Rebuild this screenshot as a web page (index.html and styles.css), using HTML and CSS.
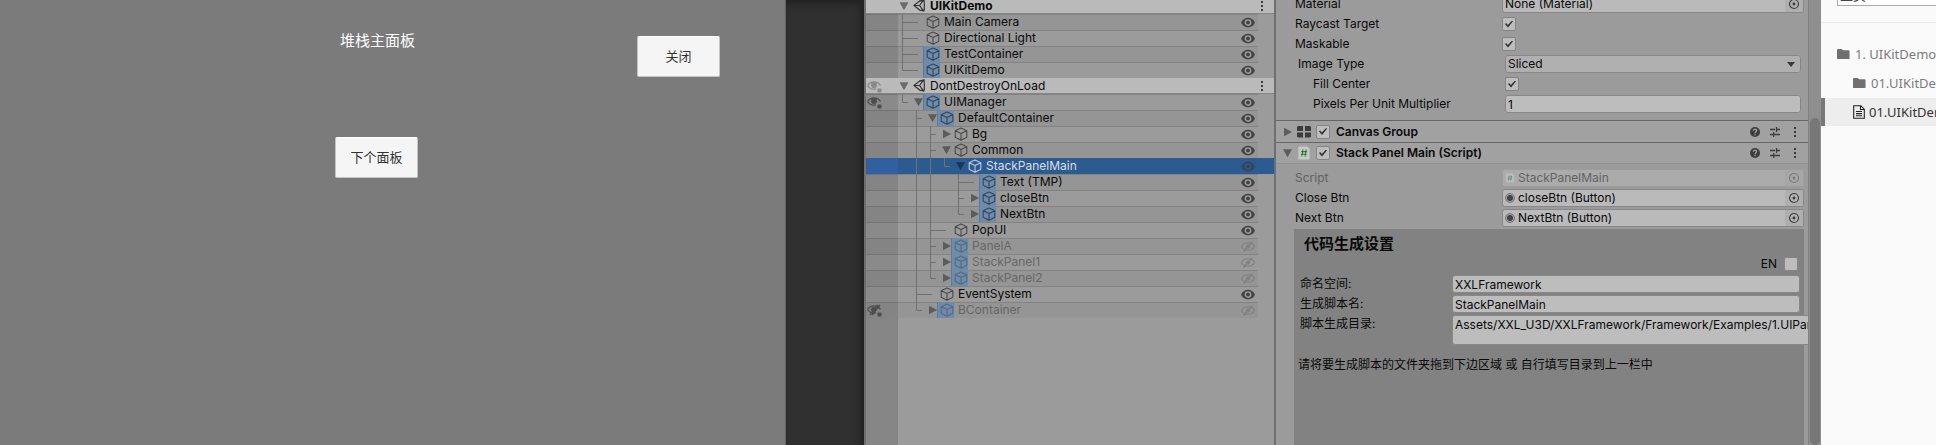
FILE: index.html
```
<!DOCTYPE html>
<html lang="zh-CN">
<head>
<meta charset="utf-8">
<title>UIKitDemo</title>
<link rel="stylesheet" href="styles.css">
</head>
<body>
<svg class="defs" aria-hidden="true">
  <symbol id="cube" viewBox="0 0 14 14"><path d="M7 .9 12.8 3.7V10.3L7 13.2 1.2 10.3V3.7ZM1.2 3.7 7 6.5 12.8 3.7M7 6.5V13.2" fill="none" stroke="currentColor" stroke-width="1.1" stroke-linejoin="round"/></symbol>
  <symbol id="unity" viewBox="0 0 13 13"><path d="M11.4 4.2 10.9.9 7.6 1.9M7.6 1.2 1 6.4 7.6 11.8M10.9 12.1 11.5 8.8M7.8 11.2 10.9 12.1M1.4 6.5H6.6M6.6 6.5 10.2 1.4M6.6 6.5 10.2 11.6M11.3 3.8V9.2" fill="none" stroke="currentColor" stroke-width="1.2"/></symbol>
  <symbol id="down" viewBox="0 0 10 16"><path d="M1.5 4.2H10.5L6 12.2Z" fill="currentColor"/></symbol>
  <symbol id="right" viewBox="0 0 10 16"><path d="M2.5 3.8V12.2L10.5 8Z" fill="currentColor"/></symbol>
  <symbol id="line" viewBox="0 0 14 16"><path d="M4.5 0V16" stroke="#707070"/></symbol>
  <symbol id="tee" viewBox="0 0 14 16"><path d="M4.5 0V16M5 8.5H10" stroke="#707070" fill="none"/></symbol>
  <symbol id="end" viewBox="0 0 14 16"><path d="M4.5 0V8.5H10" stroke="#707070" fill="none"/></symbol>
  <symbol id="teelong" viewBox="0 0 25 16"><path d="M4.5 0V16M5 8.5H20" stroke="#707070" fill="none"/></symbol>
  <symbol id="endlong" viewBox="0 0 25 16"><path d="M4.5 0V8.5H20" stroke="#707070" fill="none"/></symbol>
  <symbol id="eye" viewBox="0 0 14 11"><path d="M0 5.5C3-1 11-1 14 5.5 11 12 3 12 0 5.5Z" fill="currentColor"/><circle class="iris" cx="7" cy="5.5" r="2.7" fill="none" stroke="#a2a2a2" stroke-width="1.3"/></symbol>
  <symbol id="eyesel" viewBox="0 0 14 11"><path d="M0 5.5C3-1 11-1 14 5.5 11 12 3 12 0 5.5Z" fill="currentColor"/><circle cx="7" cy="5.5" r="2.7" fill="none" stroke="#2c5b8f" stroke-width="1.3"/></symbol>
  <symbol id="eyeoff" viewBox="0 0 14 11"><path d="M.5 5.5C3 .5 11 .5 13.5 5.5 11 10.500 3 10.500 .5 5.5ZM2.500 10.500 11.500 .5" fill="none" stroke="currentColor" stroke-width="1.200"/><circle cx="7" cy="5.5" r="2" fill="currentColor"/></symbol>
  <symbol id="eyepart" viewBox="0 0 15 13"><path d="M.5 5.5C3.500 .6 10.500 .6 13.500 5.5M.5 5.5C2.500 8.800 5.500 9.600 9 9" fill="none" stroke="currentColor" stroke-width="1.300"/><circle cx="7" cy="5" r="3" fill="currentColor"/><rect x="10.500" y="8.500" width="4" height="4" rx="1" fill="currentColor"/></symbol>
  <symbol id="eyeoffpart" viewBox="0 0 15 13"><path d="M.5 5.5C3.500 .6 10.500 .6 13.500 5.5M.5 5.5C2.500 8.800 5.500 9.600 9 9M3 11 11 .8M5 11 13 1" fill="none" stroke="currentColor" stroke-width="1.300"/><circle cx="6.500" cy="5.500" r="2.600" fill="currentColor"/><rect x="10.500" y="8.500" width="4" height="4" rx="1" fill="currentColor"/></symbol>
  <symbol id="kebab" viewBox="0 0 4 12"><path d="M1 1h2v2H1ZM1 5h2v2H1ZM1 9h2v2H1Z" fill="currentColor"/></symbol>
  <symbol id="target" viewBox="0 0 12 12"><circle cx="6" cy="6" r="4.500" fill="none" stroke="currentColor" stroke-width="1.100"/><circle cx="6" cy="6" r="1.400" fill="currentColor"/></symbol>
  <symbol id="dot" viewBox="0 0 10 10"><circle cx="5" cy="5" r="4.500" fill="#a2a2a2" stroke="#777"/><circle cx="5" cy="5" r="3" fill="#444"/></symbol>
  <symbol id="help" viewBox="0 0 12 12"><circle cx="6" cy="6" r="5" fill="currentColor"/><path d="M4.300 4.800C4.300 2.500 7.700 2.500 7.700 4.600 7.700 5.800 6 5.700 6 7.200M6 8V9.300" fill="none" stroke="#a6a6a6" stroke-width="1.300"/></symbol>
  <symbol id="preset" viewBox="0 0 12 12"><path d="M1 3.500H6M7.500 3.500H11M7.500 1V6M1 8.500H4M5.500 8.500H11M4.700 6V11" fill="none" stroke="currentColor" stroke-width="1.300"/></symbol>
  <symbol id="script" viewBox="0 0 14 16"><path d="M2.500 .5H10.500L13.500 3.500V14Q13.500 15.500 12 15.500H2.500Q.5 15.500 .5 14V2Q.5 .5 2.500 .5Z" fill="#c9c9c9" stroke="#b5b5b5"/><path d="M5.800 4 4.600 12M9.400 4 8.200 12M3.800 6.400H10.600M3.400 9.500H10.200" fill="none" stroke="#2f7a35" stroke-width="1.200"/></symbol>
  <symbol id="group" viewBox="0 0 14 12"><path d="M1 0H6V5H0V1ZM8 0H13L14 1V5H8ZM0 6.500H6V11.500H1L0 10.500ZM8 6.500H14V10.500L13 11.500H8Z" fill="currentColor"/></symbol>
  <symbol id="folder" viewBox="0 0 14 12"><path d="M0 1.500Q0 .5 1 .5H5L6.500 2H12.500Q13.500 2 13.500 3V10.500Q13.500 11.500 12.500 11.500H1Q0 11.500 0 10.500Z" fill="#707070"/></symbol>
  <symbol id="file" viewBox="0 0 12 14"><path d="M.7 .7H7.800L11.300 4.200V13.300H.7ZM7.500 .7V4.500H11.300M3 6.500H9M3 8.600H9M3 10.700H9" fill="none" stroke="#222" stroke-width="1.100"/></symbol>
</svg>
<div class="app">
  <section class="game">
    <div class="game-top">
      <h1 class="game-title">堆栈主面板</h1>
      <button class="game-btn">关闭</button>
    </div>
    <button class="game-btn">下个面板</button>
  </section>
  <div class="backdrop"></div>
  <section class="hierarchy">
    <ul class="tree">
      <li class="row scene"><span class="gutter"></span><svg class="fold"><use href="#down"/></svg><svg class="logo"><use href="#unity"/></svg><span class="name strong">UIKitDemo</span><svg class="more"><use href="#kebab"/></svg></li>
      <li class="row"><span class="gutter"></span><svg class="guide long"><use href="#teelong"/></svg><span class="icon"><svg><use href="#cube"/></svg></span><span class="name">Main Camera</span><svg class="eye"><use href="#eye"/></svg></li>
      <li class="row"><span class="gutter"></span><svg class="guide long"><use href="#teelong"/></svg><span class="icon"><svg><use href="#cube"/></svg></span><span class="name">Directional Light</span><svg class="eye"><use href="#eye"/></svg></li>
      <li class="row"><span class="gutter"></span><svg class="guide long"><use href="#teelong"/></svg><span class="icon prefab"><svg><use href="#cube"/></svg></span><span class="name">TestContainer</span><svg class="eye"><use href="#eye"/></svg></li>
      <li class="row"><span class="gutter"></span><svg class="guide long"><use href="#endlong"/></svg><span class="icon prefab"><svg><use href="#cube"/></svg></span><span class="name">UIKitDemo</span><svg class="eye"><use href="#eye"/></svg></li>
      <li class="row scene"><span class="gutter"><svg class="mark faint"><use href="#eyepart"/></svg></span><svg class="fold"><use href="#down"/></svg><svg class="logo"><use href="#unity"/></svg><span class="name">DontDestroyOnLoad</span><svg class="more"><use href="#kebab"/></svg></li>
      <li class="row"><span class="gutter"><svg class="mark"><use href="#eyepart"/></svg></span><svg class="guide"><use href="#end"/></svg><svg class="arrow"><use href="#down"/></svg><span class="icon prefab"><svg><use href="#cube"/></svg></span><span class="name">UIManager</span><svg class="eye"><use href="#eye"/></svg></li>
      <li class="row"><span class="gutter"></span><span class="guide"></span><svg class="guide"><use href="#tee"/></svg><svg class="arrow"><use href="#down"/></svg><span class="icon prefab"><svg><use href="#cube"/></svg></span><span class="name">DefaultContainer</span><svg class="eye"><use href="#eye"/></svg></li>
      <li class="row"><span class="gutter"></span><span class="guide"></span><svg class="guide"><use href="#line"/></svg><svg class="guide"><use href="#tee"/></svg><svg class="arrow"><use href="#right"/></svg><span class="icon"><svg><use href="#cube"/></svg></span><span class="name">Bg</span><svg class="eye"><use href="#eye"/></svg></li>
      <li class="row"><span class="gutter"></span><span class="guide"></span><svg class="guide"><use href="#line"/></svg><svg class="guide"><use href="#tee"/></svg><svg class="arrow"><use href="#down"/></svg><span class="icon"><svg><use href="#cube"/></svg></span><span class="name">Common</span><svg class="eye"><use href="#eye"/></svg></li>
      <li class="row selected"><span class="gutter"></span><span class="guide"></span><svg class="guide"><use href="#line"/></svg><svg class="guide"><use href="#line"/></svg><svg class="guide"><use href="#end"/></svg><svg class="arrow"><use href="#down"/></svg><span class="icon"><svg><use href="#cube"/></svg></span><span class="name">StackPanelMain</span><svg class="eye"><use href="#eyesel"/></svg></li>
      <li class="row"><span class="gutter"></span><span class="guide"></span><svg class="guide"><use href="#line"/></svg><svg class="guide"><use href="#line"/></svg><span class="guide"></span><svg class="guide long"><use href="#teelong"/></svg><span class="icon prefab"><svg><use href="#cube"/></svg></span><span class="name">Text (TMP)</span><svg class="eye"><use href="#eye"/></svg></li>
      <li class="row"><span class="gutter"></span><span class="guide"></span><svg class="guide"><use href="#line"/></svg><svg class="guide"><use href="#line"/></svg><span class="guide"></span><svg class="guide"><use href="#tee"/></svg><svg class="arrow"><use href="#right"/></svg><span class="icon prefab"><svg><use href="#cube"/></svg></span><span class="name">closeBtn</span><svg class="eye"><use href="#eye"/></svg></li>
      <li class="row"><span class="gutter"></span><span class="guide"></span><svg class="guide"><use href="#line"/></svg><svg class="guide"><use href="#line"/></svg><span class="guide"></span><svg class="guide"><use href="#end"/></svg><svg class="arrow"><use href="#right"/></svg><span class="icon prefab"><svg><use href="#cube"/></svg></span><span class="name">NextBtn</span><svg class="eye"><use href="#eye"/></svg></li>
      <li class="row"><span class="gutter"></span><span class="guide"></span><svg class="guide"><use href="#line"/></svg><svg class="guide long"><use href="#teelong"/></svg><span class="icon"><svg><use href="#cube"/></svg></span><span class="name">PopUI</span><svg class="eye"><use href="#eye"/></svg></li>
      <li class="row off"><span class="gutter"></span><span class="guide"></span><svg class="guide"><use href="#line"/></svg><svg class="guide"><use href="#tee"/></svg><svg class="arrow"><use href="#right"/></svg><span class="icon prefab"><svg><use href="#cube"/></svg></span><span class="name">PanelA</span><svg class="eye"><use href="#eyeoff"/></svg></li>
      <li class="row off"><span class="gutter"></span><span class="guide"></span><svg class="guide"><use href="#line"/></svg><svg class="guide"><use href="#tee"/></svg><svg class="arrow"><use href="#right"/></svg><span class="icon prefab"><svg><use href="#cube"/></svg></span><span class="name">StackPanel1</span><svg class="eye"><use href="#eyeoff"/></svg></li>
      <li class="row off"><span class="gutter"></span><span class="guide"></span><svg class="guide"><use href="#line"/></svg><svg class="guide"><use href="#end"/></svg><svg class="arrow"><use href="#right"/></svg><span class="icon prefab"><svg><use href="#cube"/></svg></span><span class="name">StackPanel2</span><svg class="eye"><use href="#eyeoff"/></svg></li>
      <li class="row"><span class="gutter"></span><span class="guide"></span><svg class="guide long"><use href="#teelong"/></svg><span class="icon"><svg><use href="#cube"/></svg></span><span class="name">EventSystem</span><svg class="eye"><use href="#eye"/></svg></li>
      <li class="row off"><span class="gutter"><svg class="mark"><use href="#eyeoffpart"/></svg></span><span class="guide"></span><svg class="guide"><use href="#end"/></svg><svg class="arrow"><use href="#right"/></svg><span class="icon prefab"><svg><use href="#cube"/></svg></span><span class="name">BContainer</span><svg class="eye"><use href="#eyeoff"/></svg></li>
    </ul>
    <div class="tree-rest"></div>
  </section>
  <section class="inspector">
    <div class="props image-props">
      <div class="prop"><label for="material">Material</label><div class="object"><input id="material" value="None (Material)" readonly><button class="pick" aria-label="Select material"><svg><use href="#target"/></svg></button></div></div>
      <div class="prop"><label for="raycast">Raycast Target</label><input class="check" id="raycast" type="checkbox" checked></div>
      <div class="prop"><label for="maskable">Maskable</label><input class="check" id="maskable" type="checkbox" checked></div>
      <div class="prop inset"><label for="imagetype">Image Type</label><div class="choice"><select id="imagetype"><option>Sliced</option></select><svg viewBox="0 0 8 5"><path d="M0 0H8L4 5Z" fill="#3a3a3a"/></svg></div></div>
      <div class="prop inset sub"><label for="fill">Fill Center</label><input class="check" id="fill" type="checkbox" checked></div>
      <div class="prop inset sub"><label for="ppu">Pixels Per Unit Multiplier</label><input class="text" id="ppu" value="1"></div>
    </div>
    <header class="component">
      <svg class="arrow"><use href="#right"/></svg><svg class="type"><use href="#group"/></svg><input class="check" id="canvasgroup" type="checkbox" checked><label for="canvasgroup">Canvas Group</label>
      <svg class="tool"><use href="#help"/></svg><svg class="tool"><use href="#preset"/></svg><svg class="more"><use href="#kebab"/></svg>
    </header>
    <header class="component open">
      <svg class="arrow"><use href="#down"/></svg><svg class="type"><use href="#script"/></svg><input class="check" id="stackpanel" type="checkbox" checked><label for="stackpanel">Stack Panel Main (Script)</label>
      <svg class="tool"><use href="#help"/></svg><svg class="tool"><use href="#preset"/></svg><svg class="more"><use href="#kebab"/></svg>
    </header>
    <div class="props script-props">
      <div class="prop disabled"><label for="script-ref">Script</label><div class="object"><svg class="ref"><use href="#script"/></svg><input id="script-ref" value="StackPanelMain" readonly><button class="pick" aria-label="Select script"><svg><use href="#target"/></svg></button></div></div>
      <div class="prop"><label for="closeref">Close Btn</label><div class="object"><svg class="ref"><use href="#dot"/></svg><input id="closeref" value="closeBtn (Button)" readonly><button class="pick" aria-label="Select close button"><svg><use href="#target"/></svg></button></div></div>
      <div class="prop"><label for="nextref">Next Btn</label><div class="object"><svg class="ref"><use href="#dot"/></svg><input id="nextref" value="NextBtn (Button)" readonly><button class="pick" aria-label="Select next button"><svg><use href="#target"/></svg></button></div></div>
    </div>
    <div class="codegen">
      <h2>代码生成设置</h2>
      <div class="lang"><label for="en">EN</label><input class="check" id="en" type="checkbox"></div>
      <div class="gen"><label for="ns">命名空间:</label><input class="text" id="ns" value="XXLFramework"></div>
      <div class="gen"><label for="cls">生成脚本名:</label><input class="text" id="cls" value="StackPanelMain"></div>
      <div class="gen path"><label for="dir">脚本生成目录:</label><textarea class="text" id="dir">Assets/XXL_U3D/XXLFramework/Framework/Examples/1.UIPanel</textarea></div>
      <p>请将要生成脚本的文件夹拖到下边区域 或 自行填写目录到上一栏中</p>
    </div>
  </section>
  <div class="scroll"><div class="thumb"></div></div>
  <nav class="docs">
    <div class="docs-head"><input class="search" aria-label="搜索" value="主页"></div>
    <ul>
      <li><a href="#"><svg class="folder"><use href="#folder"/></svg>1. UIKitDemo</a></li>
      <li class="child"><a href="#"><svg class="folder"><use href="#folder"/></svg>01.UIKitDemo</a></li>
      <li class="child current"><a href="#"><svg class="file"><use href="#file"/></svg>01.UIKitDemo</a></li>
    </ul>
  </nav>
</div>
</body>
</html>
```
FILE: styles.css
```
* { box-sizing: border-box; }
body { margin: 0; overflow: hidden; font: 12px/16px Inter, "Noto Sans CJK SC", sans-serif; color: #090909; background: #303030; }
ul { list-style: none; margin: 0; padding: 0; }
svg { display: block; flex: none; overflow: visible; }
symbol { overflow: visible; }
input, select, textarea, button { font: inherit; color: inherit; margin: 0; min-width: 0; }
.defs { position: absolute; width: 0; height: 0; }
.app { display: grid; grid-template-columns: 786fr 78fr 412fr 532fr 13px 115fr; height: 100vh; overflow: hidden; }
.app > * { min-width: 0; overflow: hidden; }

/* game view */
.game { background: #7b7b7b; border-right: 1px solid #5d6268; padding: 36px 65px 0 335px; }
.game-top { display: flex; justify-content: space-between; margin-bottom: 60px; }
.game-title { margin: 0; padding: 0 5px; font: 15px/8px "Noto Sans CJK SC", sans-serif; color: #fff; }
.game-btn { width: 83px; height: 41px; border: 1px solid #c4c4c4; border-top-color: #fff; border-radius: 2px; background: #f5f5f5; color: #323232; font: 13px/16px "Noto Sans CJK SC", sans-serif; padding: 0 0 2px; }
.backdrop { background: #303030; box-shadow: inset -4px 4px 6px #222; }

/* hierarchy */
.hierarchy { display: flex; flex-direction: column; background: #9b9b9b; border: solid #6f6f6f; border-width: 0 2px; }
.tree { margin-top: -2px; }
.row { display: flex; align-items: center; height: 16px; background: linear-gradient(#838383, #838383) 0 0 / calc(100% - 16px) 1px no-repeat, #9b9b9b; padding-right: 19px; }
.row:nth-child(even) { background: linear-gradient(#838383, #838383) 0 0 / calc(100% - 16px) 1px no-repeat, linear-gradient(#959595, #959595) 0 0 / calc(100% - 16px) 100% no-repeat, #9b9b9b; }
.gutter { flex: none; width: 32px; height: 16px; background: #0000001c; padding: 2px 0 0 1px; }
.mark { width: 15px; height: 13px; color: #4c4c4c; }
.mark.faint { color: #888; }
.guide { flex: none; width: 14px; height: 16px; }
.guide.long { width: 25px; }
.arrow { width: 11px; height: 16px; color: #5c5c5c; }
.icon { width: 17px; height: 16px; padding: 1px 0 0 3px; color: #4b4b4b; }
.icon svg { width: 14px; height: 14px; }
.icon.prefab { background: #718aa5; border-left: 1px solid #4b7fb4; padding-left: 2px; color: #2b4967; }
.name { flex: 1; padding-left: 4px; white-space: nowrap; }
.eye { width: 14px; height: 11px; color: #444; }
.row.scene, .row.scene:nth-child(even) { background: #bababa; border-bottom: 1px solid #858585; padding-right: 10px; }
.scene .gutter { background: none; }
.fold { width: 14px; height: 16px; color: #6a6a6a; padding-right: 4px; }
.logo { width: 13px; height: 13px; margin-left: 1px; color: #333; }
.scene .name { padding-left: 4px; }
.strong { font-weight: 700; }
.more { width: 4px; height: 12px; color: #3a3a3a; }
.row.selected { background: #2c5b8f; color: #d8dee6; }
.selected .gutter { background: #3060a2; }
.selected .icon { color: #b9cbe0; }
.selected .arrow { color: #1e3553; }
.selected .eye { color: #344457; }
.off .name { color: #676767; }
.off .icon { color: #4e6c8c; }
.off .eye { color: #808080; }
.tree-rest { flex: 1; width: 32px; background: #868686; }

/* inspector */
.inspector { display: flex; flex-direction: column; background: #9b9b9b; }
.props { padding: 0 4px 0 19px; }
.image-props { height: 120px; display: flex; flex-direction: column; justify-content: flex-end; padding-bottom: 6px; }
.script-props { padding-top: 4px; }
.prop { display: grid; grid-template-columns: 207px minmax(0, 1fr); align-items: center; height: 20px; flex: none; }
.prop.inset { padding: 0 3px; }
.prop.sub label { padding-left: 15px; }
.text, .object, .choice { height: 18px; border: 1px solid #878787; border-radius: 3px; background: #bdbdbd; }
.text { padding: 0 2px; width: 100%; }
.object { display: flex; align-items: center; overflow: hidden; background: #bababa; }
.object input { flex: 1; height: 16px; border: 0; padding: 0 2px; background: none; }
.ref { width: 10px; height: 10px; margin-left: 2px; }
.ref + input { padding-left: 3px; }
.pick { width: 18px; height: 16px; padding: 0 3px; border: 0; background: #afafaf; color: #3a3a3a; }
.pick svg { width: 12px; height: 12px; }
.choice { display: flex; align-items: center; background: #b0b0b0; padding-right: 5px; }
.choice select { flex: 1; appearance: none; border: 0; padding: 0 2px; background: none; line-height: 16px; }
.choice svg { width: 8px; height: 5px; }
.disabled { color: #626262; }
.disabled .object { background: #ababab; border-color: #9d9d9d; }
.disabled .pick { background: #a7a7a7; color: #7a7a7a; }
.disabled .ref { opacity: .6; }
.check { appearance: none; flex: none; width: 14px; height: 14px; border: 1px solid #858585; border-radius: 2px; background: #bdbdbd; display: grid; place-items: center; }
.check:checked::before { content: ""; width: 8px; height: 7px; background: #2f2f2f; clip-path: polygon(0 50%, 14% 36%, 36% 65%, 88% 0, 100% 12%, 38% 100%); }
.component { display: flex; align-items: center; flex: none; height: 22px; border-top: 1px solid #666; background: #a1a1a1; padding: 0 11px 0 5px; font-weight: 600; }
.component.open { border-bottom: 1px solid #929292; }
.component .type { width: 14px; height: 14px; margin: 0 5px; color: #3c3c3c; }
.component label { flex: 1; padding-left: 6px; }
.component .tool { width: 12px; height: 12px; margin-right: 8px; color: #3c3c3c; }
.component .more { margin-left: 4px; }
.codegen { flex: 1; margin: 1px 4px 0 18px; padding: 4px 4px 0 6px; background: #828282; }
.codegen h2 { margin: 0; padding-left: 4px; font: 700 15px/20px "Noto Sans CJK SC", sans-serif; }
.lang { display: flex; justify-content: flex-end; align-items: center; gap: 7px; height: 21px; padding-right: 2px; }
.gen { display: grid; grid-template-columns: 152px minmax(0, 1fr); height: 20px; align-items: center; }
.gen.path { height: 32px; align-items: start; margin-right: -14px; }
.gen.path label { padding-top: 2px; }
.gen textarea { height: 30px; margin-top: 1px; padding-top: 1px; resize: none; overflow: hidden; white-space: nowrap; display: block; }
.codegen p { margin: 11px 0 0 -2px; }
.scroll { background: #8f8f8f; border-left: 1px solid #808080; padding: 118px 1px 0; }
.thumb { height: 100%; background: #777; border-radius: 5px; }

/* docs navigation */
.docs { background: #fafafa; color: #7a7a7a; font: 13px/28px "Noto Sans", sans-serif; }
.docs-head { display: flex; height: 23px; border-bottom: 1px solid #eaeaea; padding-left: 16px; }
.search { flex: none; width: 200px; height: 24px; margin-top: -18px; border: 1px solid #aaa; background: #fff; color: #444; font: 13px/20px "Noto Sans CJK SC", sans-serif; }
.docs ul { padding-top: 17px; }
.docs li { margin-bottom: 1px; }
.docs a { display: flex; align-items: center; gap: 5px; padding-left: 16px; color: inherit; text-decoration: none; white-space: nowrap; }
.docs .child a { padding-left: 32px; }
.docs .current a { gap: 4px; padding-left: 28px; border-left: 4px solid #777; background: #ededed; color: #333; }
.folder { width: 13px; height: 12px; }
.file { width: 12px; height: 14px; }
```
